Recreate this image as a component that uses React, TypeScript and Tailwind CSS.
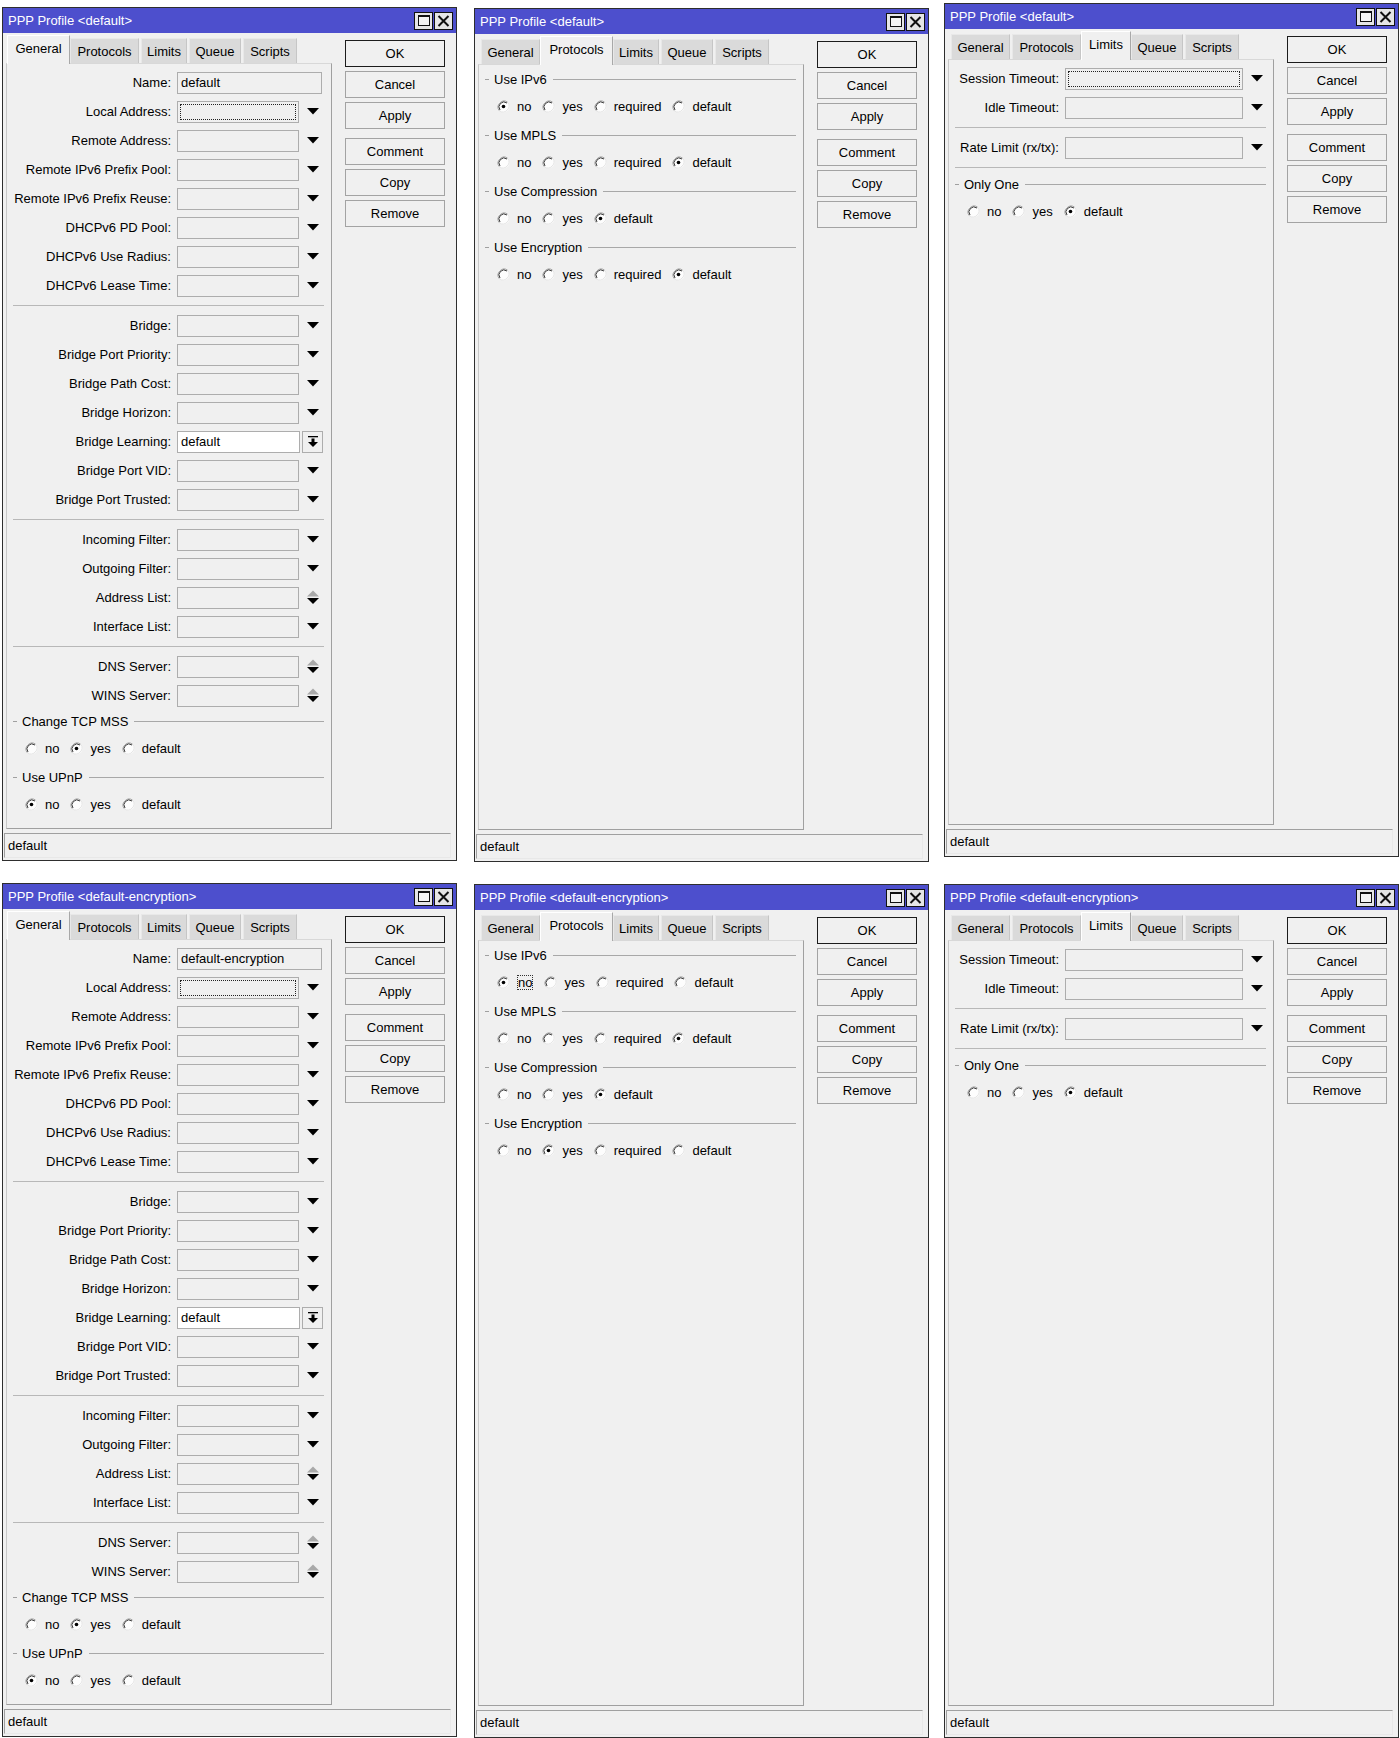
import React from 'react';

type Kind = 'drop' | 'spin' | 'learn' | 'none';

function DropIcon() {
  return (
    <svg width="12" height="7" viewBox="0 0 12 7">
      <polygon points="0,0 12,0 6,6.5" fill="#000" />
    </svg>
  );
}

function SpinIcon() {
  return (
    <svg width="12" height="15" viewBox="0 0 12 15">
      <polygon points="6,0.5 12,6.5 0,6.5" fill="#a9a9a9" />
      <polygon points="0,8 12,8 6,14" fill="#000" />
    </svg>
  );
}

function LearnIcon() {
  return (
    <svg width="10" height="11" viewBox="0 0 10 11">
      <rect x="0" y="0" width="10" height="1.3" fill="#000" />
      <rect x="3.5" y="2.5" width="3" height="4" fill="#000" />
      <polygon points="0,6 10,6 5,11" fill="#000" />
    </svg>
  );
}

function Field({
  label,
  lw,
  iw,
  kind = 'drop',
  value,
  focus,
  white,
}: {
  label: string;
  lw: string;
  iw: string;
  kind?: Kind;
  value?: string;
  focus?: boolean;
  white?: boolean;
}) {
  return (
    <div className="flex items-center h-[29px]">
      <div className={`${lw} shrink-0 text-right whitespace-nowrap`}>{label}</div>
      <div
        className={`relative ml-[6px] h-[22px] ${iw} shrink-0 border border-[#adadad] ${
          white ? 'bg-white' : 'bg-[#f0f0f0]'
        } flex items-center pl-[3px] whitespace-nowrap`}
      >
        {value}
        {focus && <div className="absolute inset-[2px] border border-dotted border-[#222]" />}
      </div>
      {kind === 'drop' && (
        <div className="pl-[8px] flex items-center">
          <DropIcon />
        </div>
      )}
      {kind === 'spin' && (
        <div className="pl-[8px] flex items-center">
          <SpinIcon />
        </div>
      )}
      {kind === 'learn' && (
        <div className="ml-[2px] h-[22px] w-[21px] border border-[#adadad] bg-[#f0f0f0] flex items-center justify-center">
          <LearnIcon />
        </div>
      )}
    </div>
  );
}

function Sep() {
  return <div className="ml-[6px] mr-[7px] my-[5px] h-px bg-[#b8b8b8]" />;
}

function Radio({ label, checked, focus }: { label: string; checked?: boolean; focus?: boolean }) {
  return (
    <div className="flex items-center mr-[11px]">
      <svg width="13" height="13" viewBox="0 0 13 13" className="shrink-0">
        <circle cx="6.5" cy="6.5" r="6" fill="#fdfdfd" />
        <path d="M2.3 10.7 A6 6 0 0 1 10.7 2.3" stroke="#9a9a9a" strokeWidth="1" fill="none" />
        <path d="M3 10 A5 5 0 0 1 10 3" stroke="#3a3a3a" strokeWidth="1" fill="none" />
        <path d="M10.7 2.3 A6 6 0 0 1 2.3 10.7" stroke="#e4e4e4" strokeWidth="1" fill="none" />
        {checked && <circle cx="6.5" cy="6.5" r="1.8" fill="#000" />}
      </svg>
      <span className={`ml-[7px] ${focus ? 'border border-dotted border-[#333] -my-px' : ''}`}>{label}</span>
    </div>
  );
}

function Group({
  title,
  opts,
  sel,
  focusIdx,
}: {
  title: string;
  opts: string[];
  sel: number;
  focusIdx?: number;
}) {
  return (
    <div>
      <div className="flex items-center h-[22px] pl-[6px] pr-[7px]">
        <div className="w-[4px] h-px bg-[#a0a0a0]" />
        <span className="ml-[5px] whitespace-nowrap">{title}</span>
        <div className="flex-1 ml-[6px] h-px bg-[#a8a8a8]" />
      </div>
      <div className="flex items-center h-[34px] pb-[2px] pl-[18px]">
        {opts.map((o, i) => (
          <Radio key={o} label={o} checked={i === sel} focus={i === focusIdx} />
        ))}
      </div>
    </div>
  );
}

function GeneralTab({ name }: { name: string }) {
  const L = 'w-[164px]';
  const I = 'w-[122px]';
  return (
    <div className="pt-[4px]">
      <Field label="Name:" lw={L} iw="w-[145px]" kind="none" value={name} />
      <Field label="Local Address:" lw={L} iw={I} focus />
      <Field label="Remote Address:" lw={L} iw={I} />
      <Field label="Remote IPv6 Prefix Pool:" lw={L} iw={I} />
      <Field label="Remote IPv6 Prefix Reuse:" lw={L} iw={I} />
      <Field label="DHCPv6 PD Pool:" lw={L} iw={I} />
      <Field label="DHCPv6 Use Radius:" lw={L} iw={I} />
      <Field label="DHCPv6 Lease Time:" lw={L} iw={I} />
      <Sep />
      <Field label="Bridge:" lw={L} iw={I} />
      <Field label="Bridge Port Priority:" lw={L} iw={I} />
      <Field label="Bridge Path Cost:" lw={L} iw={I} />
      <Field label="Bridge Horizon:" lw={L} iw={I} />
      <Field label="Bridge Learning:" lw={L} iw="w-[123px]" kind="learn" value="default" white />
      <Field label="Bridge Port VID:" lw={L} iw={I} />
      <Field label="Bridge Port Trusted:" lw={L} iw={I} />
      <Sep />
      <Field label="Incoming Filter:" lw={L} iw={I} />
      <Field label="Outgoing Filter:" lw={L} iw={I} />
      <Field label="Address List:" lw={L} iw={I} kind="spin" />
      <Field label="Interface List:" lw={L} iw={I} />
      <Sep />
      <Field label="DNS Server:" lw={L} iw={I} kind="spin" />
      <Field label="WINS Server:" lw={L} iw={I} kind="spin" />
      <Group title="Change TCP MSS" opts={['no', 'yes', 'default']} sel={1} />
      <Group title="Use UPnP" opts={['no', 'yes', 'default']} sel={0} />
    </div>
  );
}

function ProtocolsTab({ ipv6, enc, focusNo }: { ipv6: number; enc: number; focusNo?: boolean }) {
  const four = ['no', 'yes', 'required', 'default'];
  return (
    <div className="pt-[3px]">
      <Group title="Use IPv6" opts={four} sel={ipv6} focusIdx={focusNo ? 0 : undefined} />
      <Group title="Use MPLS" opts={four} sel={3} />
      <Group title="Use Compression" opts={['no', 'yes', 'default']} sel={2} />
      <Group title="Use Encryption" opts={four} sel={enc} />
    </div>
  );
}

function LimitsTab({ focus }: { focus?: boolean }) {
  const L = 'w-[110px]';
  const I = 'w-[178px]';
  return (
    <div className="pt-[4px]">
      <Field label="Session Timeout:" lw={L} iw={I} focus={focus} />
      <Field label="Idle Timeout:" lw={L} iw={I} />
      <Sep />
      <Field label="Rate Limit (rx/tx):" lw={L} iw={I} />
      <Sep />
      <Group title="Only One" opts={['no', 'yes', 'default']} sel={2} />
    </div>
  );
}

const TABS: { name: string; w: string; wa: string }[] = [
  { name: 'General', w: 'w-[59px]', wa: 'w-[63px]' },
  { name: 'Protocols', w: 'w-[69px]', wa: 'w-[73px]' },
  { name: 'Limits', w: 'w-[46px]', wa: 'w-[50px]' },
  { name: 'Queue', w: 'w-[52px]', wa: 'w-[56px]' },
  { name: 'Scripts', w: 'w-[54px]', wa: 'w-[58px]' },
];

function Tabs({ active }: { active: string }) {
  return (
    <div className="flex items-end h-[28px] pl-[3px] gap-[2px]">
      {TABS.map((t) =>
        t.name === active ? (
          <div
            key={t.name}
            className={`${t.wa} -mx-[2px] h-[29px] -mb-px relative z-10 bg-[#f0f0f0] border-t border-l border-r border-t-white border-l-white border-r-[#a8a8a8] flex justify-center pt-[6px]`}
          >
            {t.name}
          </div>
        ) : (
          <div
            key={t.name}
            className={`${t.w} h-[25px] bg-[#dadada] border-t border-l border-r border-t-[#e8e8e8] border-l-[#e8e8e8] border-r-[#c6c6c6] flex items-center justify-center`}
          >
            {t.name}
          </div>
        )
      )}
    </div>
  );
}

function Buttons() {
  const b = 'h-[27px] w-[100px] border border-[#a3a3a3] bg-[#f0f0f0] flex items-center justify-center';
  return (
    <div className="ml-[13px] mt-[5px] flex flex-col gap-[4px]">
      <div className="h-[27px] w-[100px] border border-[#1c1c1c] bg-[#f0f0f0] flex items-center justify-center">OK</div>
      <div className={b}>Cancel</div>
      <div className={b}>Apply</div>
      <div className={`${b} mt-[5px]`}>Comment</div>
      <div className={b}>Copy</div>
      <div className={b}>Remove</div>
    </div>
  );
}

function TitleBar({ title }: { title: string }) {
  return (
    <div className="h-[25px] bg-[#4d4fcd] flex items-center justify-between pl-[5px] pr-[3px]">
      <span className="text-white whitespace-nowrap">{title}</span>
      <div className="flex gap-[1px]">
        <div className="w-[19px] h-[18px] border border-[#111] bg-[#e6e6e6] flex items-center justify-center">
          <div className="w-[12px] h-[11px] border border-[#111] border-t-2 bg-[#f4f4f4]" />
        </div>
        <div className="w-[19px] h-[18px] border border-[#111] bg-[#e6e6e6] flex items-center justify-center">
          <svg width="13" height="12" viewBox="0 0 13 12">
            <path d="M1.5 1 L11.5 11 M11.5 1 L1.5 11" stroke="#111" strokeWidth="2" />
          </svg>
        </div>
      </div>
    </div>
  );
}

function Win({
  title,
  tab,
  className,
  children,
}: {
  title: string;
  tab: string;
  className: string;
  children: React.ReactNode;
}) {
  return (
    <div className={`w-[455px] h-[854px] shrink-0 border border-[#2e2e2e] bg-[#f0f0f0] flex flex-col ${className}`}>
      <TitleBar title={title} />
      <div className="flex pl-[3px] pt-[2px] h-[796px]">
        <div className="w-[326px] flex flex-col">
          <Tabs active={tab} />
          <div className="flex-1 border border-t-[#d8d8d8] border-l-[#c8c8c8] border-r-[#a0a0a0] border-b-[#a0a0a0] overflow-hidden">
            {children}
          </div>
        </div>
        <Buttons />
      </div>
      <div className="mt-[4px] ml-[1px] mr-[5px] h-[25px] border border-t-[#a0a0a0] border-l-[#a0a0a0] border-b-[#e8e8e8] border-r-[#e8e8e8] flex items-center pl-[3px]">
        default
      </div>
    </div>
  );
}

export default function App() {
  return (
    <div className="w-[1400px] h-[1738px] bg-white overflow-hidden text-[13px] leading-none text-black font-['Liberation_Sans',Arial,sans-serif]">
      <div className="flex items-start">
        <Win className="ml-[2px] mt-[7px]" title="PPP Profile <default>" tab="General">
          <GeneralTab name="default" />
        </Win>
        <Win className="ml-[17px] mt-[8px]" title="PPP Profile <default>" tab="Protocols">
          <ProtocolsTab ipv6={0} enc={3} />
        </Win>
        <Win className="ml-[15px] mt-[3px]" title="PPP Profile <default>" tab="Limits">
          <LimitsTab focus />
        </Win>
      </div>
      <div className="flex items-start mt-[21px]">
        <Win className="ml-[2px]" title="PPP Profile <default-encryption>" tab="General">
          <GeneralTab name="default-encryption" />
        </Win>
        <Win className="ml-[17px] mt-[1px]" title="PPP Profile <default-encryption>" tab="Protocols">
          <ProtocolsTab ipv6={0} enc={1} focusNo />
        </Win>
        <Win className="ml-[15px] mt-[1px]" title="PPP Profile <default-encryption>" tab="Limits">
          <LimitsTab />
        </Win>
      </div>
    </div>
  );
}
